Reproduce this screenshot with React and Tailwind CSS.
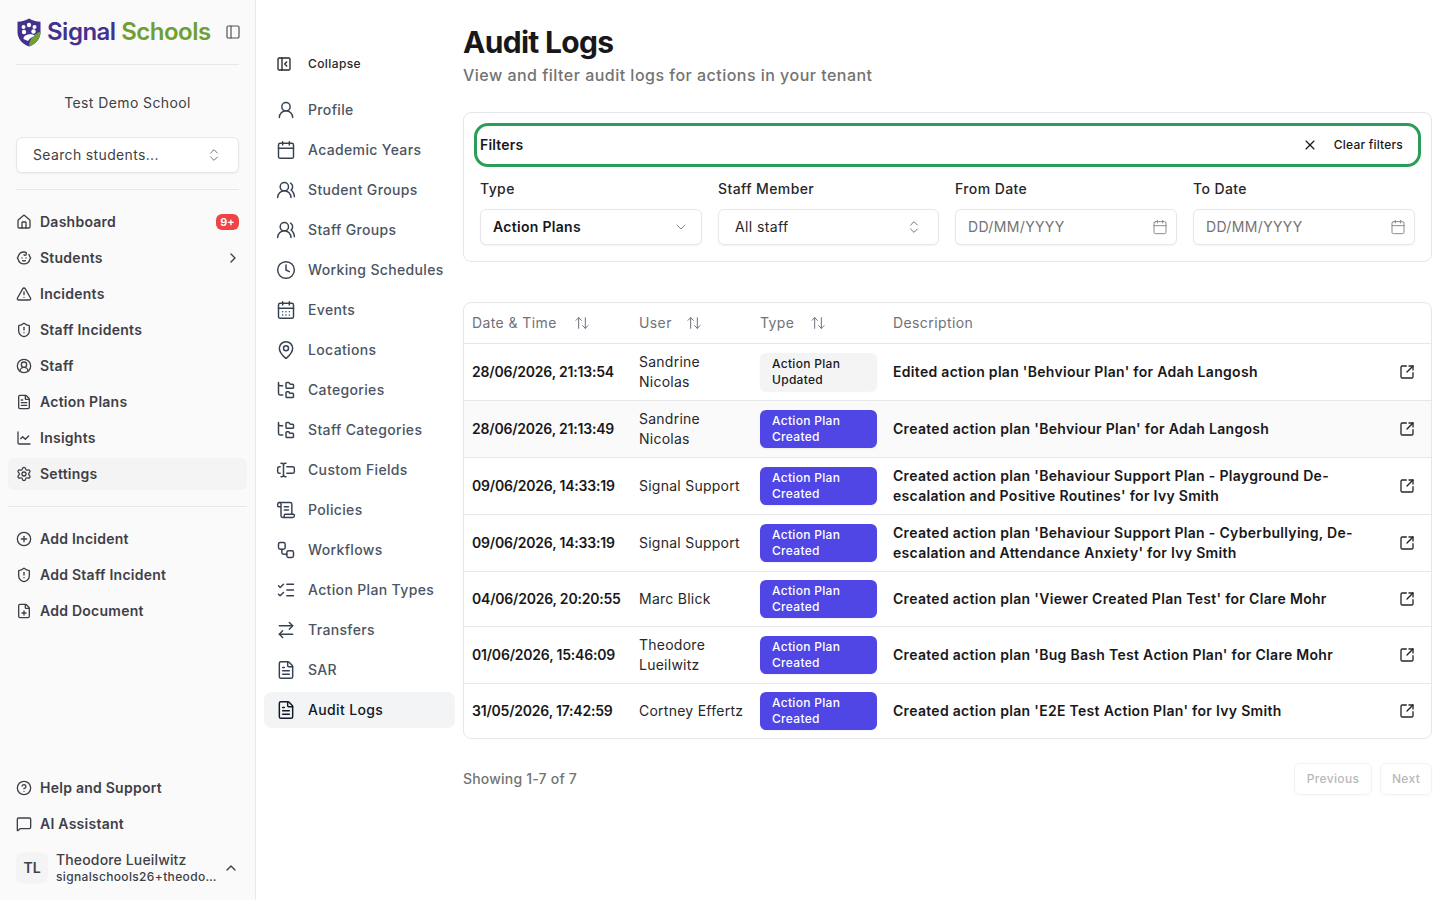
import React from 'react';
import {
  House, Baby, TriangleAlert, ShieldAlert, CircleUserRound, FileText, ChartLine, Settings, CirclePlus, FilePlus,
  CircleHelp, MessageSquare, ChevronUp, ChevronRight, ChevronDown, PanelLeft, ChevronsUpDown, PanelLeftClose,
  UserRound, Calendar, UsersRound, Clock, CalendarDays, MapPin, FolderTree, TextCursorInput, ScrollText, Workflow,
  ListChecks, ArrowRightLeft, X, ArrowUpDown, SquareArrowOutUpRight,
} from 'lucide-react';

const font = { fontFamily: 'Inter, "Liberation Sans", sans-serif' };

const mainNav = [
  [House, 'Dashboard'], [Baby, 'Students'], [TriangleAlert, 'Incidents'], [ShieldAlert, 'Staff Incidents'],
  [CircleUserRound, 'Staff'], [FileText, 'Action Plans'], [ChartLine, 'Insights'], [Settings, 'Settings'],
];
const addNav = [[CirclePlus, 'Add Incident'], [ShieldAlert, 'Add Staff Incident'], [FilePlus, 'Add Document']];
const settingsNav = [
  [UserRound, 'Profile'], [Calendar, 'Academic Years'], [UsersRound, 'Student Groups'], [UsersRound, 'Staff Groups'],
  [Clock, 'Working Schedules'], [CalendarDays, 'Events'], [MapPin, 'Locations'], [FolderTree, 'Categories'],
  [FolderTree, 'Staff Categories'], [TextCursorInput, 'Custom Fields'], [ScrollText, 'Policies'], [Workflow, 'Workflows'],
  [ListChecks, 'Action Plan Types'], [ArrowRightLeft, 'Transfers'], [FileText, 'SAR'], [FileText, 'Audit Logs'],
];
const rows = [
  ['28/06/2026, 21:13:54', 'Sandrine Nicolas', 'Action Plan Updated', "Edited action plan 'Behviour Plan' for Adah Langosh"],
  ['28/06/2026, 21:13:49', 'Sandrine Nicolas', 'Action Plan Created', "Created action plan 'Behviour Plan' for Adah Langosh"],
  ['09/06/2026, 14:33:19', 'Signal Support', 'Action Plan Created', "Created action plan 'Behaviour Support Plan - Playground De-escalation and Positive Routines' for Ivy Smith"],
  ['09/06/2026, 14:33:19', 'Signal Support', 'Action Plan Created', "Created action plan 'Behaviour Support Plan - Cyberbullying, De-escalation and Attendance Anxiety' for Ivy Smith"],
  ['04/06/2026, 20:20:55', 'Marc Blick', 'Action Plan Created', "Created action plan 'Viewer Created Plan Test' for Clare Mohr"],
  ['01/06/2026, 15:46:09', 'Theodore Lueilwitz', 'Action Plan Created', "Created action plan 'Bug Bash Test Action Plan' for Clare Mohr"],
  ['31/05/2026, 17:42:59', 'Cortney Effertz', 'Action Plan Created', "Created action plan 'E2E Test Action Plan' for Ivy Smith"],
];

function Logo() {
  return (
    <div className="flex items-center gap-[6px]">
      <svg width="24" height="29" viewBox="0 0 24 29" className="shrink-0">
        <path d="M12 0.5 C15 2.5 19 3.5 23.5 3.8 V14 C23.5 21 18.5 26 12 28.5 C5.5 26 0.5 21 0.5 14 V3.8 C5 3.5 9 2.5 12 0.5 Z" fill="#43308f" />
        <path d="M23.5 13.5 V14 C23.5 21 18.5 26 12 28.5 C12 22 16.5 16 23.5 13.5 Z" fill="#6f9f35" />
        <circle cx="6.5" cy="9" r="2" fill="#fff" />
        <circle cx="17.5" cy="9" r="2" fill="#fff" />
        <circle cx="12" cy="7" r="2.2" fill="#fff" />
        <circle cx="7" cy="14" r="2.2" fill="#fff" />
        <circle cx="16.5" cy="13.5" r="2.2" fill="#fff" />
        <path d="M6.5 21 C6 15.5 17 15 17.5 18 C15 19 12.5 20.5 11 23 Z" fill="#fff" />
      </svg>
      <span className="text-[24px] leading-8 font-semibold tracking-[-0.5px] whitespace-nowrap">
        <span className="text-[#43308f]">Signal</span> <span className="text-[#6f9f35]">Schools</span>
      </span>
    </div>
  );
}

function SideItem({ icon: Icon, label, active, children }) {
  return (
    <div className={`h-8 px-2 flex items-center gap-2 rounded-md text-sm font-semibold text-[#3f3f46] tracking-[0.25px] ${active ? 'bg-[#f4f4f5]' : ''}`}>
      <Icon size={16} strokeWidth={2} className="shrink-0" />
      <span className="flex-1 whitespace-nowrap">{label}</span>
      {children}
    </div>
  );
}

function Field({ label, children }) {
  return (
    <div className="flex flex-col gap-[13px]">
      <div className="text-sm leading-3.5 font-medium text-[#27272a] h-3.5 tracking-[0.4px]">{label}</div>
      {children}
    </div>
  );
}

function DateInput() {
  return (
    <div className="h-9 rounded-md border border-[#e5e7eb] shadow-xs bg-white flex items-center justify-between pl-3 pr-2 text-sm text-[#737373] tracking-[0.35px]">
      <span>DD/MM/YYYY</span>
      <Calendar size={16} strokeWidth={1.5} className="text-[#8a8a8a]" />
    </div>
  );
}

function Sort() {
  return <ArrowUpDown size={16} strokeWidth={1.5} className="text-[#6b7280]" />;
}

export default function App() {
  return (
    <div style={font} className="flex h-[900px] w-[1440px] overflow-hidden bg-white text-[#18181b]">
      <aside className="w-[256px] shrink-0 h-full bg-[#fafafa] border-r border-[#e8e8e8] flex flex-col">
        <div className="px-2 pt-4">
          <div className="h-8 pl-[9px] pr-1.5 flex items-center justify-between">
            <Logo />
            <PanelLeft size={16} strokeWidth={1.8} className="text-[#52525b]" />
          </div>
          <div className="mx-2 mt-4 border-t border-[#e5e7eb]" />
          <div className="mt-[28px] text-center text-sm leading-5 text-[#3f3f46] tracking-[0.4px]">Test Demo School</div>
          <div className="mx-2 mt-[24px] h-9 rounded-md border border-[#e5e7eb] bg-white shadow-xs flex items-center justify-between pl-4 pr-4 text-sm text-[#3f3f46] tracking-[0.35px]">
            <span>Search students...</span>
            <ChevronsUpDown size={16} strokeWidth={1.5} className="text-[#71717a]" />
          </div>
          <div className="mx-2 mt-4 border-t border-[#e5e7eb]" />
        </div>
        <nav className="px-2 mt-4 flex flex-col gap-1">
          {mainNav.map(([I, l]) => (
            <SideItem key={l} icon={I} label={l} active={l === 'Settings'}>
              {l === 'Dashboard' && (
                <span className="h-4 w-[23px] rounded-md bg-[#ef4444] text-white text-center text-[11px] leading-4 font-semibold tracking-normal">9+</span>
              )}
              {l === 'Students' && <ChevronRight size={16} className="text-[#3f3f46] -mr-[2px]" />}
            </SideItem>
          ))}
        </nav>
        <div className="mx-2 mt-4 border-t border-[#e5e7eb]" />
        <nav className="px-2 mt-4 flex flex-col gap-1">
          {addNav.map(([I, l]) => <SideItem key={l} icon={I} label={l} />)}
        </nav>
        <div className="mt-auto px-2 pb-4 flex flex-col gap-1">
          <SideItem icon={CircleHelp} label="Help and Support" />
          <SideItem icon={MessageSquare} label="AI Assistant" />
          <div className="h-8 mt-[8px] px-2 flex items-center gap-2">
            <div className="w-8 h-8 rounded-lg bg-[#f4f4f5] flex items-center justify-center text-sm font-semibold text-[#3f3f46]">TL</div>
            <div className="flex-1 min-w-0">
              <div className="text-sm leading-4 mb-px font-medium text-[#3f3f46] whitespace-nowrap tracking-[0.15px]">Theodore Lueilwitz</div>
              <div className="text-xs leading-4 font-medium text-[#3f3f46] whitespace-nowrap tracking-[0.35px]">signalschools26+theodo…</div>
            </div>
            <ChevronUp size={16} className="text-[#3f3f46] shrink-0" />
          </div>
        </div>
      </aside>

      <nav className="w-[207px] shrink-0 pl-2 pr-2 pt-[46px] flex flex-col">
        <div className="h-9 px-3 flex items-center gap-3 text-xs font-medium text-[#27272a] tracking-[0.4px]">
          <PanelLeftClose size={16} strokeWidth={2} className="shrink-0" />
          <span className="ml-1">Collapse</span>
        </div>
        <div className="mt-[10px] flex flex-col gap-1">
          {settingsNav.map(([I, l]) => (
            <div key={l} className={`h-9 px-3 flex items-center gap-3 rounded-lg text-sm whitespace-nowrap tracking-[0.35px] ${l === 'Audit Logs' ? 'bg-[#f3f4f6] text-[#111827] font-medium' : 'text-[#4b5563] font-medium'}`}>
              <I size={20} strokeWidth={1.75} className={`shrink-0 ${l === 'Audit Logs' ? 'text-[#111827]' : 'text-[#374151]'}`} />
              <span>{l}</span>
            </div>
          ))}
        </div>
      </nav>

      <main className="flex-1 min-w-0 pr-2 pt-6">
        <h1 className="text-3xl leading-9 font-bold text-[#18181b] tracking-[-0.7px]">Audit Logs</h1>
        <p className="mt-[3px] text-base leading-6 font-medium text-[#737373] tracking-[0.48px]">View and filter audit logs for actions in your tenant</p>

        <section className="mt-[25px] rounded-lg border border-[#e5e7eb] bg-white p-4 h-[150px]">
          <div className="h-8 rounded-lg outline-[3px] outline-offset-[3px] outline-[#2a9d58] flex items-center justify-between">
            <span className="text-sm font-semibold text-[#18181b] tracking-[0.2px]">Filters</span>
            <div className="flex items-center gap-4 pr-3">
              <X size={16} strokeWidth={1.75} className="text-[#18181b]" />
              <span className="text-xs font-medium text-[#18181b] tracking-[0.2px]">Clear filters</span>
            </div>
          </div>
          <div className="mt-[21px] grid grid-cols-[222px_221px_222px_1fr] gap-4">
            <Field label="Type">
              <div className="h-9 rounded-md border border-[#e5e7eb] shadow-xs bg-white flex items-center justify-between pl-3 pr-3 text-sm font-semibold text-[#18181b] tracking-[0.3px]">
                <span>Action Plans</span>
                <ChevronDown size={16} strokeWidth={1.5} className="text-[#8a8a8a]" />
              </div>
            </Field>
            <Field label="Staff Member">
              <div className="h-9 rounded-md border border-[#e5e7eb] shadow-xs bg-white flex items-center justify-between pl-4 pr-4 text-sm text-[#27272a] tracking-[0.4px]">
                <span>All staff</span>
                <ChevronsUpDown size={16} strokeWidth={1.5} className="text-[#71717a]" />
              </div>
            </Field>
            <Field label="From Date"><DateInput /></Field>
            <Field label="To Date"><DateInput /></Field>
          </div>
        </section>

        <section className="mt-10 rounded-lg border border-[#e5e7eb] bg-white overflow-hidden">
          <table className="w-full table-fixed border-collapse text-sm">
            <colgroup>
              <col className="w-[167px]" />
              <col className="w-[121px]" />
              <col className="w-[133px]" />
              <col />
              <col className="w-[41px]" />
            </colgroup>
            <thead>
              <tr className="h-[40px] border-b border-[#e5e7eb] text-left text-[#71717a] tracking-[0.4px]">
                <th className="px-2 font-normal"><div className="flex items-center gap-[17px]">Date &amp; Time <Sort /></div></th>
                <th className="px-2 font-normal"><div className="flex items-center gap-[17px]"><span>User</span><span className="-ml-[3px]"><Sort /></span></div></th>
                <th className="px-2 font-normal"><div className="flex items-center gap-[16px]">Type <Sort /></div></th>
                <th className="px-2 font-normal" colSpan={2}>Description</th>
              </tr>
            </thead>
            <tbody>
              {rows.map((r, i) => (
                <tr key={i} className={`${i < rows.length - 1 ? 'border-b border-[#e5e7eb]' : ''} ${i === 1 ? 'bg-[#fafafa]' : ''}`}>
                  <td className="px-2 py-2 font-semibold text-[#18181b] tracking-[-0.2px] whitespace-nowrap">{r[0]}</td>
                  <td className="pl-2 pr-1 py-2 leading-5 text-[#27272a] tracking-[0.25px]">{r[1]}</td>
                  <td className="px-2 py-2">
                    <div className={`h-[38px] w-[117px] rounded-md px-3 flex items-center text-xs leading-4 font-medium tracking-[0.3px] shadow-xs ${r[2].includes('Updated') ? 'bg-[#f4f4f5] text-[#18181b] shadow-none' : 'bg-[#4f46e5] text-white'}`}>
                      <span className="w-[80px]">{r[2]}</span>
                    </div>
                  </td>
                  <td className="px-2 py-2 leading-5 font-semibold text-[#18181b] tracking-[0.3px]">{r[3]}</td>
                  <td className="py-2 pl-[9px]">
                    <SquareArrowOutUpRight size={16} strokeWidth={2} className="text-[#27272a]" />
                  </td>
                </tr>
              ))}
            </tbody>
          </table>
        </section>

        <div className="mt-[24px] flex items-center justify-between">
          <span className="text-sm font-medium text-[#737373] tracking-[0.2px]">Showing 1-7 of 7</span>
          <div className="flex gap-2 opacity-50">
            <div className="h-8 w-[78px] rounded-md border border-[#e5e7eb] shadow-xs flex items-center justify-center text-xs font-medium text-[#71717a] tracking-[0.35px]">Previous</div>
            <div className="h-8 w-[52px] rounded-md border border-[#e5e7eb] shadow-xs flex items-center justify-center text-xs font-medium text-[#71717a] tracking-[0.35px]">Next</div>
          </div>
        </div>
      </main>
    </div>
  );
}
